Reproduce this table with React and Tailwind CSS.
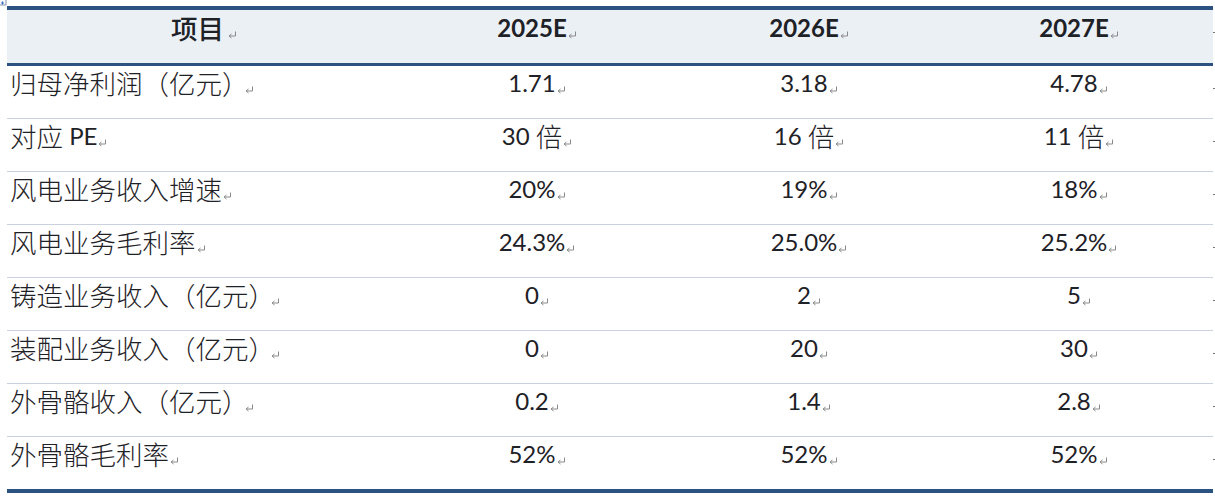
const cjk = "font-['Noto_Sans_CJK_SC',sans-serif]";
const num = "font-['Lato','Noto_Sans_CJK_SC',sans-serif]";

const rows = [
  ["归母净利润（亿元）", "1.71", "3.18", "4.78"],
  ["对应 PE", "30 倍", "16 倍", "11 倍"],
  ["风电业务收入增速", "20%", "19%", "18%"],
  ["风电业务毛利率", "24.3%", "25.0%", "25.2%"],
  ["铸造业务收入（亿元）", "0", "2", "5"],
  ["装配业务收入（亿元）", "0", "20", "30"],
  ["外骨骼收入（亿元）", "0.2", "1.4", "2.8"],
  ["外骨骼毛利率", "52%", "52%", "52%"],
];

const Mark = ({ gap }) => (
  <svg
    width="9"
    height="8"
    viewBox="0 0 9 8"
    className={`inline-block shrink-0 self-end mb-[6px] ${gap || "ml-[1px]"}`}
  >
    <path d="M7.5 0.5 V5 H1.5" fill="none" stroke="#8a8a8a" strokeWidth="1" />
    <path d="M3.5 3 L1 5 L3.5 7" fill="none" stroke="#8a8a8a" strokeWidth="1" />
  </svg>
);

// split a cell into latin runs and CJK runs so each gets its own size
const Mixed = ({ text, bold }) => {
  const parts = text.match(/[\u3000-\u9fff\uff00-\uffef]+|[^\u3000-\u9fff\uff00-\uffef]+/g);
  return parts.map((p, i) =>
    /[\u3000-\u9fff\uff00-\uffef]/.test(p) ? (
      <span key={i} className={`${cjk} text-[26.5px] ${bold ? "font-medium" : "font-light"}`}>
        {p}
      </span>
    ) : (
      <span key={i} className={`${num} text-[24px] whitespace-pre ${bold ? "font-bold" : ""}`}>
        {p}
      </span>
    )
  );
};

const Cell = ({ w, center, pad, children }) => (
  <div className={`${w} flex items-start ${center ? "justify-center" : ""} ${pad || ""}`}>
    <div className="flex h-[34px] leading-[34px] overflow-visible">{children}</div>
  </div>
);

const App = () => {
  return (
    <div className="relative w-[1215px] h-[497px] bg-white text-[#1e2126] overflow-hidden">
      <svg width="7" height="6" viewBox="0 0 7 6" className="absolute left-0 top-0">
        <rect x="-1" y="-1" width="7" height="6" fill="#f4f6fa" stroke="#8a97a8" strokeWidth="1" />
        <path d="M1 3 H4 M2.5 1.5 V4.5" stroke="#3a6fc4" strokeWidth="1" />
      </svg>

      <div className="pt-[6px] pl-[7px] flex">
        <div className="w-[1206px] flex flex-col">
          <div className="border-t-4 border-[#2c5282]" />
          <div className="flex h-[56px] bg-[#ebf0f5] border-b-[3px] border-[#2c5282] pt-[1px]">
            <Cell w="w-[394px]" center>
              <Mixed text="项目" bold />
              <Mark gap="ml-[4px]" />
            </Cell>
            {["2025E", "2026E", "2027E"].map((h, i) => (
              <Cell key={h} w={i === 2 ? "w-[268px]" : "w-[272px]"} center>
                <Mixed text={h} bold />
                <Mark />
              </Cell>
            ))}
          </div>

          {rows.map((r, ri) => (
            <div
              key={ri}
              className={`flex ${
                ri === rows.length - 1 ? "h-[52px]" : "h-[53px] border-b border-[#c9d2de]"
              }`}
            >
              <Cell w="w-[394px]" pad="pl-[3px]">
                <Mixed text={r[0]} />
                <Mark gap={r[0].endsWith("）") ? "-ml-[4px]" : ""} />
              </Cell>
              {r.slice(1).map((c, ci) => (
                <Cell key={ci} w={ci === 2 ? "w-[268px]" : "w-[272px]"} center>
                  <Mixed text={c} />
                  <Mark />
                </Cell>
              ))}
            </div>
          ))}
          <div className="border-t-4 border-[#2c5282]" />
        </div>

        {/* end-of-row markers */}
        <div className="w-[2px] flex flex-col pt-[26px]">
          {Array.from({ length: 9 }).map((_, i) => (
            <div key={i} className={i === 0 ? "h-[56px]" : "h-[53px]"}>
              <div className="w-[2px] h-[1px] bg-[#777]" />
            </div>
          ))}
        </div>
      </div>
    </div>
  );
};

export default App;
